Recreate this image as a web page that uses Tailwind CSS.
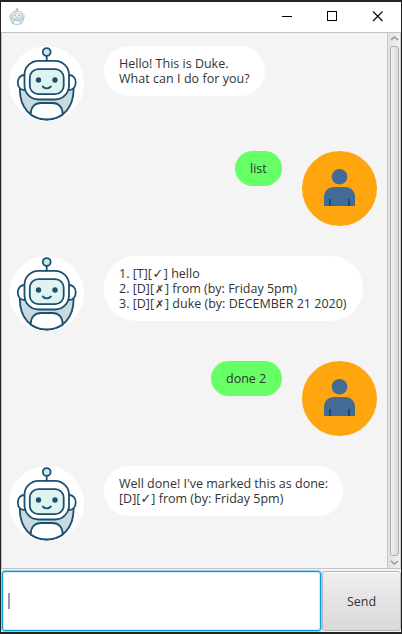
<!DOCTYPE html>
<html lang="en">
<head>
<meta charset="utf-8">
<title>Duke</title>
<script src="https://cdn.jsdelivr.net/npm/@tailwindcss/browser@4"></script>
</head>
<body class="w-[402px] h-[634px] overflow-hidden bg-[#232323] pt-[2px] pl-px pr-px pb-[2px] font-['Open_Sans','Noto_Sans','DejaVu_Sans',sans-serif] text-[12.5px] leading-[15px] text-[#333]">
<svg width="0" height="0" class="absolute">
  <defs>
    <symbol id="robot" viewBox="0 0 75 75">
      <g fill="none" stroke="#1b5071" stroke-width="1.8" stroke-linecap="round" stroke-linejoin="round">
        <path d="M10.8 43C10.8 62 22 73.500 37.700 73.500S64.600 62 64.600 43Z" fill="#cbdadf"/>
        <path d="M21.700 68.500C21.700 61 26 57 32 57H43.500C49.500 57 53.700 61 53.700 68.500Q46 73.500 37.700 73.500T21.700 68.500Z" fill="#fff"/>
        <path d="M15.500 29C11.500 29 8.800 32 8.800 36.500S11.500 44 15.500 44M60 29C64 29 66.700 32 66.700 36.500S64 44 60 44" fill="#fff"/>
        <rect x="15.500" y="14.800" width="44.500" height="38.700" rx="14" fill="#fff"/>
        <rect x="20.800" y="23.200" width="33.900" height="25" rx="8.500" fill="#dff3f0"/>
        <path d="M37.700 10V14.800M33.700 40.500Q37.700 44.300 41.900 40.500"/>
        <circle cx="37.700" cy="6" r="3.900" fill="#cbe8ea"/>
      </g>
      <circle cx="29.500" cy="34" r="2.700" fill="#1b5071"/><circle cx="46" cy="34" r="2.700" fill="#1b5071"/>
    </symbol>
    <symbol id="person" viewBox="0 0 75 75">
      <circle cx="37.500" cy="25.700" r="7.800" fill="#436b95"/>
      <path d="M22 55V46C22 40 26.500 36 32 36H43C48.500 36 53 40 53 46V55Z" fill="#436b95"/>
      <path d="M27 48H29V55H27ZM46 48H48V55H46Z" fill="#0f4f86"/>
    </symbol>
  </defs>
</svg>
<div class="w-[400px] h-[630px] flex flex-col bg-[#f4f4f4]">
  <header class="h-[30px] shrink-0 bg-white flex items-center">
    <svg width="16" height="17" viewBox="7 0 62 76" preserveAspectRatio="none" class="ml-[8px] -mt-[1px] opacity-65"><use href="#robot" width="75" height="75"/></svg>
    <svg width="138" height="30" class="ml-auto" fill="none" stroke="#000" shape-rendering="crispEdges">
      <path d="M19 14.500H29M64.500 9.500H73.500V18.500H64.500Z"/>
      <path d="M110 9.500L119.500 19M119.500 9.500L110 19" stroke-width="1.100" shape-rendering="auto"/>
    </svg>
  </header>
  <main class="h-[537px] shrink-0 flex border border-[#c3c3c3] border-r-[#c8c8c8]">
    <div class="flex-1 pt-[13px] pl-[7px] pr-[10px] flex flex-col gap-[30px]">
      <div class="h-[75px] flex items-start gap-[20px]">
        <svg width="75" height="75" class="bg-white rounded-full"><use href="#robot"/></svg>
        <div class="w-[161px] h-[50px] rounded-[25px] bg-white pl-[15px] pt-[10px] whitespace-nowrap">
          <p>Hello! This is Duke.</p><p class="tracking-[0.04px]">What can I do for you?</p>
        </div>
      </div>
      <div class="h-[75px] flex items-start justify-end gap-[20px]">
        <div class="w-[47px] h-[35px] rounded-[17.5px] bg-[#66ff66] pl-[15px] pt-[10px] whitespace-nowrap">list</div>
        <svg width="75" height="75" class="bg-[#ffa50d] rounded-full"><use href="#person"/></svg>
      </div>
      <div class="h-[75px] flex items-start gap-[20px]">
        <svg width="75" height="75" class="bg-white rounded-full"><use href="#robot"/></svg>
        <div class="w-[259px] h-[65px] rounded-[32px] bg-white pl-[15px] pt-[10px] whitespace-nowrap">
          <p class="h-[15px]">1. [T][<span class="inline-block w-[12px] text-center leading-none text-[13px] font-['DejaVu_Sans']">✓</span>] hello</p>
          <p class="h-[15px]">2. [D][<span class="inline-block w-[11px] text-center leading-none text-[11px] font-['DejaVu_Sans']">✗</span>] from (by: Friday 5pm)</p>
          <p class="h-[15px]">3. [D][<span class="inline-block w-[11px] text-center leading-none text-[11px] font-['DejaVu_Sans']">✗</span>] duke (by: DECEMBER 21 2020)</p>
        </div>
      </div>
      <div class="h-[75px] flex items-start justify-end gap-[20px]">
        <div class="w-[71px] h-[35px] rounded-[17.5px] bg-[#66ff66] pl-[15px] pt-[10px] whitespace-nowrap">done 2</div>
        <svg width="75" height="75" class="bg-[#ffa50d] rounded-full"><use href="#person"/></svg>
      </div>
      <div class="h-[75px] flex items-start gap-[20px]">
        <svg width="75" height="75" class="bg-white rounded-full"><use href="#robot"/></svg>
        <div class="w-[239px] h-[50px] rounded-[25px] bg-white pl-[15px] pt-[10px] whitespace-nowrap">
          <p class="h-[15px]">Well done! I've marked this as done:</p>
          <p class="h-[15px]">[D][<span class="inline-block w-[11px] text-center leading-none text-[13px] font-['DejaVu_Sans']">✓</span>] from (by: Friday 5pm)</p>
        </div>
      </div>
    </div>
    <div class="w-[13px] border-l border-[#c8c8c8] bg-gradient-to-r from-[#e0e0e0] to-[#f0f0f0] flex flex-col items-center">
      <svg width="11" height="13" fill="none" stroke="#929292" stroke-width="1.400"><path d="M2 7L5.500 4L9 7"/></svg>
      <div class="w-[9px] flex-1 rounded-[3px] border border-[#b0b0b0] bg-gradient-to-r from-[#f2f2f2] to-[#dadada]"></div>
      <svg width="11" height="12" fill="none" stroke="#929292" stroke-width="1.400"><path d="M2 5L5.500 8L9 5"/></svg>
    </div>
  </main>
  <footer class="flex-1 flex pt-px">
    <div class="w-[321px] rounded-[4px] bg-[#8fcfe8] p-px flex">
      <div class="flex-1 bg-white border border-[#039ed3] rounded-[3px] shadow-[inset_0_0_0_1px_#d5edf7] flex items-center pl-[5px]"><span class="w-[2px] h-[16px] bg-[#999]"></span></div>
    </div>
    <button class="flex-1 mt-px mb-px border border-[#b5b5b5] rounded-[3px] bg-gradient-to-b from-[#efefef] to-[#d9d9d9] shadow-[inset_0_1px_0_#fafafa]">Send</button>
  </footer>
</div>
</body>
</html>
